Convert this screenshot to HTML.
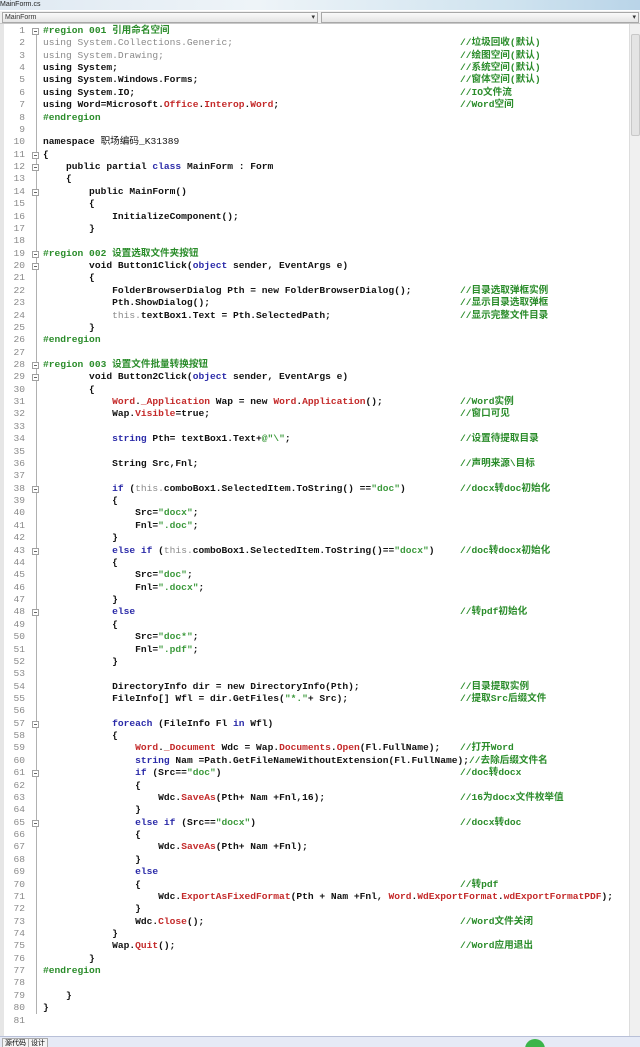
<!DOCTYPE html>
<html><head><meta charset="utf-8"><style>
html,body{margin:0;padding:0;width:640px;height:1047px;overflow:hidden;background:#fff;}
body{position:relative;font-family:"Liberation Mono","Noto Sans CJK SC",monospace;}
#title{position:absolute;left:0;top:0;width:640px;height:10px;background:linear-gradient(90deg,#dfe9f2,#eef4f8 40%,#cfe3ef 80%,#b9d4e8);font:7px "Liberation Sans",sans-serif;color:#222;line-height:10px;}
#combo{position:absolute;top:11px;height:12px;left:0;width:640px;background:#f0f0f0;border-bottom:1px solid #c8c8c8;}
.cb{position:absolute;top:1px;height:9px;border:1px solid #a8a8a8;background:linear-gradient(#fafafa,#e4e4e4);font:7px "Liberation Sans",sans-serif;line-height:9px;color:#333;}
#gut{position:absolute;left:0;top:24px;width:4px;height:1012px;background:#e6e6e6;}
#scroll{position:absolute;left:629px;top:24px;width:11px;height:1012px;background:#f0f0f0;border-left:1px solid #ddd;}
#thumb{position:absolute;left:631px;top:34px;width:7px;height:100px;background:#e4e4e4;border:1px solid #c8c8c8;border-radius:2px;}
#bottom{position:absolute;left:0;top:1036px;width:640px;height:11px;background:#e6eaf6;border-top:1px solid #b8c0d8;font:7px "Liberation Sans","Noto Sans CJK SC",sans-serif;}
.tab{position:absolute;top:1px;height:9px;line-height:9px;padding:0 2px;border:1px solid #aaa;background:#f4f4f4;}
.ln{position:absolute;width:25px;text-align:right;font-size:9.6px;color:#8a8a8a;height:12px;line-height:12px;}
.l{position:absolute;left:43px;white-space:pre;font-size:9.6px;font-weight:bold;color:#111;height:12px;line-height:12px;}
.cm{position:absolute;left:460px;white-space:pre;font-size:9.6px;font-weight:bold;color:#2a8c2a;height:12px;line-height:12px;}
.k{color:#2a2aa8}.r{color:#c42a2a}.s{color:#3c9a3c}.c{color:#2a8c2a}.g{color:#8a8a8a;font-weight:normal}
#fold{position:absolute;left:36px;top:34px;width:1px;height:980px;background:#b0b0b0;}
.fb{position:absolute;left:32px;width:7px;height:7px;border:1px solid #a0a0a0;background:#fff;box-sizing:border-box;}
.fb:after{content:"";position:absolute;left:1px;top:2px;width:3px;height:1px;background:#666;}
</style></head><body>
<div id="title">MainForm.cs</div>
<div id="combo"><div class="cb" style="left:2px;width:314px;">&nbsp;MainForm<span style="position:absolute;right:2px">▾</span></div><div class="cb" style="left:321px;width:316px;"><span style="position:absolute;right:2px">▾</span></div></div>
<div id="gut"></div>
<div id="fold"></div>
<div id="scroll"></div><div id="thumb"></div>
<div id="bottom"><div class="tab" style="left:2px">源代码</div><div class="tab" style="left:28px">设计</div><div style="position:absolute;left:525px;top:2px;width:20px;height:20px;border-radius:50%;background:#3bb54a"></div></div>
<div id="code"></div>
<script>
var L=[
['<span class="c">#region 001 引用命名空间</span>'],
['<span class="g">using System.Collections.Generic;</span>','//垃圾回收(默认)'],
['<span class="g">using System.Drawing;</span>','//绘图空间(默认)'],
['using System;','//系统空间(默认)'],
['using System.Windows.Forms;','//窗体空间(默认)'],
['using System.IO;','//IO文件流'],
['using Word=Microsoft.<span class="r">Office</span>.<span class="r">Interop</span>.<span class="r">Word</span>;','//Word空间'],
['<span class="c">#endregion</span>'],
[''],
['namespace <span style="font-weight:normal">职场编码_K31389</span>'],
['{'],
['    public partial <span class="k">class</span> MainForm : Form'],
['    {'],
['        public MainForm()'],
['        {'],
['            InitializeComponent();'],
['        }'],
[''],
['<span class="c">#region 002 设置选取文件夹按钮</span>'],
['        void Button1Click(<span class="k">object</span> sender, EventArgs e)'],
['        {'],
['            FolderBrowserDialog Pth = new FolderBrowserDialog();','//目录选取弹框实例'],
['            Pth.ShowDialog();','//显示目录选取弹框'],
['            <span class="g">this.</span>textBox1.Text = Pth.SelectedPath;','//显示完整文件目录'],
['        }'],
['<span class="c">#endregion</span>'],
[''],
['<span class="c">#region 003 设置文件批量转换按钮</span>'],
['        void Button2Click(<span class="k">object</span> sender, EventArgs e)'],
['        {'],
['            <span class="r">Word</span>.<span class="r">_Application</span> Wap = new <span class="r">Word</span>.<span class="r">Application</span>();','//Word实例'],
['            Wap.<span class="r">Visible</span>=true;','//窗口可见'],
[''],
['            <span class="k">string</span> Pth= textBox1.Text+<span class="s">@"&#92;"</span>;','//设置待提取目录'],
[''],
['            String Src,Fnl;','//声明来源&#92;目标'],
[''],
['            <span class="k">if</span> (<span class="g">this.</span>comboBox1.SelectedItem.ToString() ==<span class="s">"doc"</span>)','//docx转doc初始化'],
['            {'],
['                Src=<span class="s">"docx"</span>;'],
['                Fnl=<span class="s">".doc"</span>;'],
['            }'],
['            <span class="k">else if</span> (<span class="g">this.</span>comboBox1.SelectedItem.ToString()==<span class="s">"docx"</span>)','//doc转docx初始化'],
['            {'],
['                Src=<span class="s">"doc"</span>;'],
['                Fnl=<span class="s">".docx"</span>;'],
['            }'],
['            <span class="k">else</span>','//转pdf初始化'],
['            {'],
['                Src=<span class="s">"doc*"</span>;'],
['                Fnl=<span class="s">".pdf"</span>;'],
['            }'],
[''],
['            DirectoryInfo dir = new DirectoryInfo(Pth);','//目录提取实例'],
['            FileInfo[] Wfl = dir.GetFiles(<span class="s">"*."</span>+ Src);','//提取Src后缀文件'],
[''],
['            <span class="k">foreach</span> (FileInfo Fl <span class="k">in</span> Wfl)'],
['            {'],
['                <span class="r">Word</span>.<span class="r">_Document</span> Wdc = Wap.<span class="r">Documents</span>.<span class="r">Open</span>(Fl.FullName);','//打开Word'],
['                <span class="k">string</span> Nam =Path.GetFileNameWithoutExtension(Fl.FullName);<span class="c">//去除后缀文件名</span>'],
['                <span class="k">if</span> (Src==<span class="s">"doc"</span>)','//doc转docx'],
['                {'],
['                    Wdc.<span class="r">SaveAs</span>(Pth+ Nam +Fnl,16);','//16为docx文件枚举值'],
['                }'],
['                <span class="k">else if</span> (Src==<span class="s">"docx"</span>)','//docx转doc'],
['                {'],
['                    Wdc.<span class="r">SaveAs</span>(Pth+ Nam +Fnl);'],
['                }'],
['                <span class="k">else</span>'],
['                {','//转pdf'],
['                    Wdc.<span class="r">ExportAsFixedFormat</span>(Pth + Nam +Fnl, <span class="r">Word</span>.<span class="r">WdExportFormat</span>.<span class="r">wdExportFormatPDF</span>);'],
['                }'],
['                Wdc.<span class="r">Close</span>();','//Word文件关闭'],
['            }'],
['            Wap.<span class="r">Quit</span>();','//Word应用退出'],
['        }'],
['<span class="c">#endregion</span>'],
[''],
['    }'],
['}'],
['']
];
var h='';var folds=[1,11,12,14,19,20,28,29,38,43,48,57,61,65];
for(var i=0;i<L.length;i++){var t=(25+i*12.37).toFixed(2);
h+='<div class="ln" style="top:'+t+'px;left:0">'+(i+1)+'</div>';
h+='<div class="l" style="top:'+t+'px">'+L[i][0]+'</div>';
if(L[i][1])h+='<div class="cm" style="top:'+t+'px">'+L[i][1]+'</div>';}
for(var j=0;j<folds.length;j++){h+='<div class="fb" style="top:'+(28+(folds[j]-1)*12.37).toFixed(2)+'px"></div>';}
document.getElementById('code').innerHTML=h;
</script>
</body></html>
